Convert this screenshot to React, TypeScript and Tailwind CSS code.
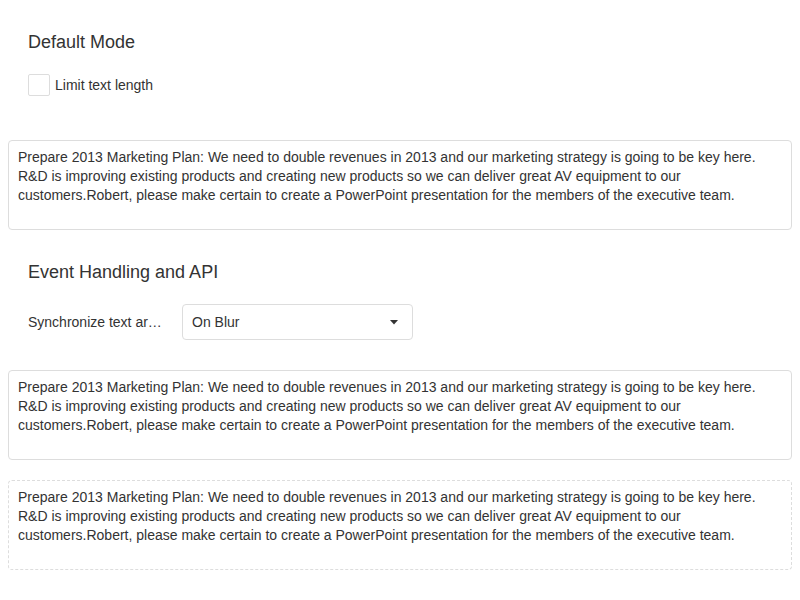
import React, { useState } from 'react';

const text =
  'Prepare 2013 Marketing Plan: We need to double revenues in 2013 and our marketing strategy is going to be key here. R&D is improving existing products and creating new products so we can deliver great AV equipment to our customers.Robert, please make certain to create a PowerPoint presentation for the members of the executive team.';

function TextArea({ dashed }: { dashed?: boolean }) {
  return (
    <textarea
      readOnly
      value={text}
      className={`block w-full h-[90px] resize-none rounded-[4px] bg-white pt-[7px] pb-[8px] pl-[9px] pr-[9px] text-[14px] leading-[19px] text-[#333] outline-none border ${
        dashed ? 'border-dashed border-[#ddd]' : 'border-solid border-[#ddd]'
      }`}
      style={{ fontFamily: '"Liberation Sans", Arial, sans-serif' }}
    />
  );
}

export default function App() {
  const [limit, setLimit] = useState<boolean>(false);

  return (
    <div
      className="w-[800px] h-[600px] bg-white px-[8px] text-[#333]"
      style={{ fontFamily: '"Liberation Sans", Arial, sans-serif' }}
    >
      <div className="px-[20px]">
        <div className="pt-[32px] text-[18px] leading-[20px]">Default Mode</div>
        <label className="mt-[22px] flex items-center gap-[5px] cursor-pointer">
          <span
            className="w-[22px] h-[22px] rounded-[2px] border border-[#ddd] bg-white"
            onClick={() => setLimit(!limit)}
          />
          <span className="text-[14px] leading-[22px]">Limit text length</span>
        </label>
      </div>

      <div className="mt-[44px]">
        <TextArea />
      </div>

      <div className="px-[20px]">
        <div className="pt-[32px] text-[18px] leading-[20px]">Event Handling and API</div>
        <div className="mt-[22px] flex items-center">
          <div className="w-[140px] truncate text-[14px]">Synchronize text area value</div>
          <div className="ml-[14px] w-[231px] h-[36px] flex items-center justify-between rounded-[4px] border border-[#ddd] pl-[9px] pr-[13px] text-[14px]">
            <span>On Blur</span>
            <svg width="10" height="5" viewBox="0 0 10 5">
              <path d="M1 0 L9 0 L5 4.5 Z" fill="#333" />
            </svg>
          </div>
        </div>
      </div>

      <div className="mt-[30px]">
        <TextArea />
      </div>
      <div className="mt-[20px]">
        <TextArea dashed />
      </div>
    </div>
  );
}
